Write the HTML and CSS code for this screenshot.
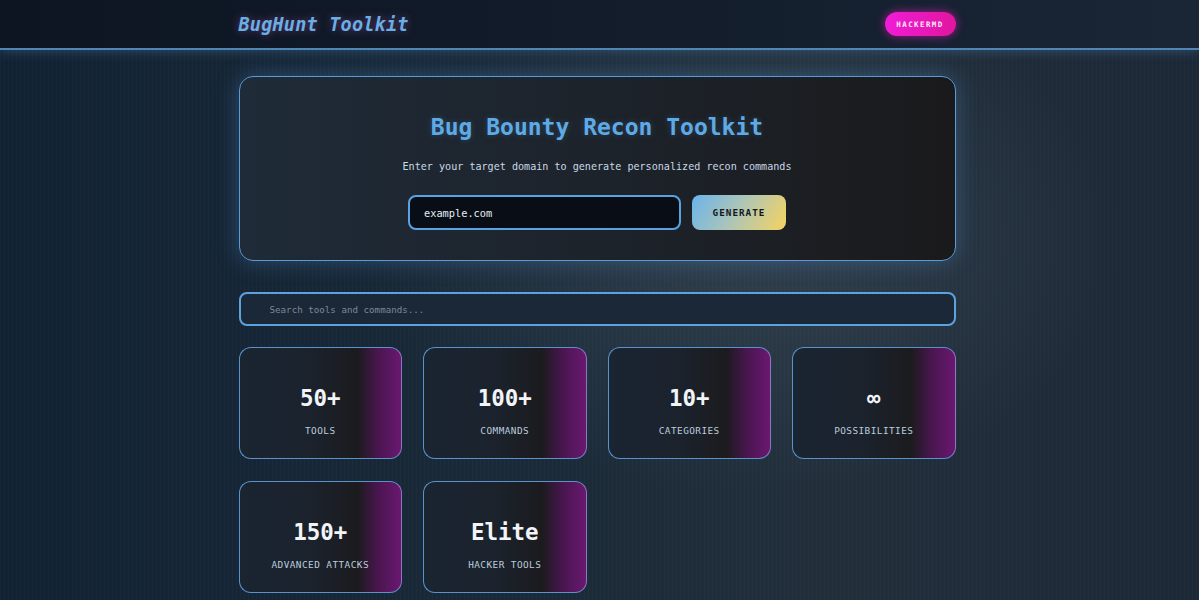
FILE: index.html
```html
<!DOCTYPE html>
<html lang="en">
<head>
<meta charset="utf-8">
<title>BugHunt Toolkit</title>
<link rel="stylesheet" href="styles.css">
</head>
<body>
<header class="topbar">
  <div class="topbar-inner">
    <div class="brand">BugHunt Toolkit</div>
    <a class="pill" href="#">HACKERMD</a>
  </div>
</header>
<main class="container">
  <section class="hero">
    <h1 class="hero-title">Bug Bounty Recon Toolkit</h1>
    <p class="hero-sub">Enter your target domain to generate personalized recon commands</p>
    <div class="hero-form">
      <input class="domain-input" type="text" value="example.com">
      <button class="gen-btn">GENERATE</button>
    </div>
  </section>
  <div class="search-box">
    <input class="search-input" type="text" placeholder="Search tools and commands...">
  </div>
  <section class="stats">
    <div class="stat"><div class="stat-num">50+</div><div class="stat-label">TOOLS</div></div>
    <div class="stat"><div class="stat-num">100+</div><div class="stat-label">COMMANDS</div></div>
    <div class="stat"><div class="stat-num">10+</div><div class="stat-label">CATEGORIES</div></div>
    <div class="stat"><div class="stat-num">∞</div><div class="stat-label">POSSIBILITIES</div></div>
    <div class="stat"><div class="stat-num">150+</div><div class="stat-label">ADVANCED ATTACKS</div></div>
    <div class="stat"><div class="stat-num">Elite</div><div class="stat-label">HACKER TOOLS</div></div>
  </section>
</main>
</body>
</html>
```
FILE: styles.css
```css
* { box-sizing: border-box; }
html, body { margin: 0; padding: 0; }
body {
  font-family: "DejaVu Sans Mono", "Liberation Mono", monospace;
  color: #d6e2ee;
  min-height: 100vh;
  background-color: #16222f;
  background-image:
    repeating-linear-gradient(90deg, rgba(120,170,220,0.035) 0 1px, transparent 1px 4px),
    radial-gradient(ellipse 45% 60% at 62% 40%, rgba(70,85,100,0.45), transparent 70%),
    linear-gradient(90deg, #122233 0%, #1b2a38 45%, #222f3b 70%, #1c2836 100%);
}
.topbar {
  height: 50px;
  background: linear-gradient(90deg, #0d1522 0%, #121c2b 50%, #1a2636 100%);
  border-bottom: 2px solid #4f86b8;
  box-shadow: 0 2px 10px rgba(79,134,184,0.35);
}
.topbar-inner {
  width: 717px;
  margin: 0 auto;
  height: 48px;
  display: flex;
  align-items: center;
  justify-content: space-between;
  position: relative;
  left: -2.5px;
}
.brand {
  font-size: 18.5px;
  font-weight: bold;
  font-style: italic;
  color: #6aaee6;
  letter-spacing: 0.2px;
  text-shadow: 0 0 8px rgba(200,100,200,0.45);
}
.pill {
  display: flex;
  align-items: center;
  justify-content: center;
  width: 71px;
  height: 24px;
  border-radius: 12px;
  background: linear-gradient(90deg, #f01cd8 0%, #e0169e 100%);
  color: #fbe9f8;
  font-size: 7.5px;
  font-weight: bold;
  letter-spacing: 1.4px;
  text-decoration: none;
  box-shadow: 0 0 10px rgba(240,30,200,0.6);
}
.container {
  width: 717px;
  margin: 0 auto;
  padding-top: 26px;
  position: relative;
  left: -2.5px;
}
.hero {
  height: 185px;
  border: 1px solid #5a9ad6;
  border-radius: 14px;
  background: linear-gradient(90deg, #1f2b38 0%, #1d232b 50%, #1a1a1c 100%);
  box-shadow: 0 0 22px rgba(80,150,215,0.35);
  padding-top: 35px;
  text-align: center;
}
.hero-title {
  margin: 0;
  font-size: 23px;
  line-height: 30px;
  font-weight: bold;
  color: #5eaae6;
  text-shadow: 0 0 6px rgba(94,170,230,0.25);
}
.hero-sub {
  margin: 17px 0 0;
  font-size: 10.1px;
  line-height: 16px;
  color: #c9d8e6;
}
.hero-form {
  margin-top: 20px;
  display: flex;
  justify-content: center;
  gap: 11px;
}
.domain-input {
  width: 273px;
  height: 35px;
  border: 2px solid #5aa2e0;
  border-radius: 8px;
  background: #080d16;
  color: #e6edf4;
  font-family: inherit;
  font-size: 10.3px;
  padding: 0 14px;
  outline: none;
}
.gen-btn {
  width: 94px;
  height: 35px;
  border: none;
  border-radius: 8px;
  background: linear-gradient(120deg, #6ab4ec 0%, #b0c6b4 50%, #f6d35e 100%);
  color: #14181e;
  font-family: inherit;
  font-size: 9.3px;
  font-weight: bold;
  letter-spacing: 1px;
}
.search-box {
  margin-top: 31px;
}
.search-input {
  width: 100%;
  height: 34px;
  border: 2px solid #5aa2e0;
  border-radius: 8px;
  background: #1b2838;
  color: #d6e2ee;
  font-family: inherit;
  font-size: 9.2px;
  padding: 0 0 0 29px;
  outline: none;
}
.search-input::placeholder { color: #7c8896; }
.stats {
  margin-top: 21px;
  display: grid;
  grid-template-columns: repeat(4, 1fr);
  gap: 22px 21px;
}
.stat {
  height: 112px;
  border: 1px solid #5a92cc;
  border-right-color: #8a78c2;
  border-radius: 12px;
  background: linear-gradient(90deg, #1a2532 0%, #1b222c 45%, #1b1b1e 73%, #4a1650 86%, #6a1870 100%);
  text-align: center;
  padding-top: 36px;
}
.stat-num {
  font-size: 22.5px;
  line-height: 28px;
  font-weight: bold;
  color: #f2f5f8;
}
.stat-label {
  margin-top: 12px;
  font-size: 9.4px;
  line-height: 14px;
  letter-spacing: 0.45px;
  color: #bccdde;
}
```
